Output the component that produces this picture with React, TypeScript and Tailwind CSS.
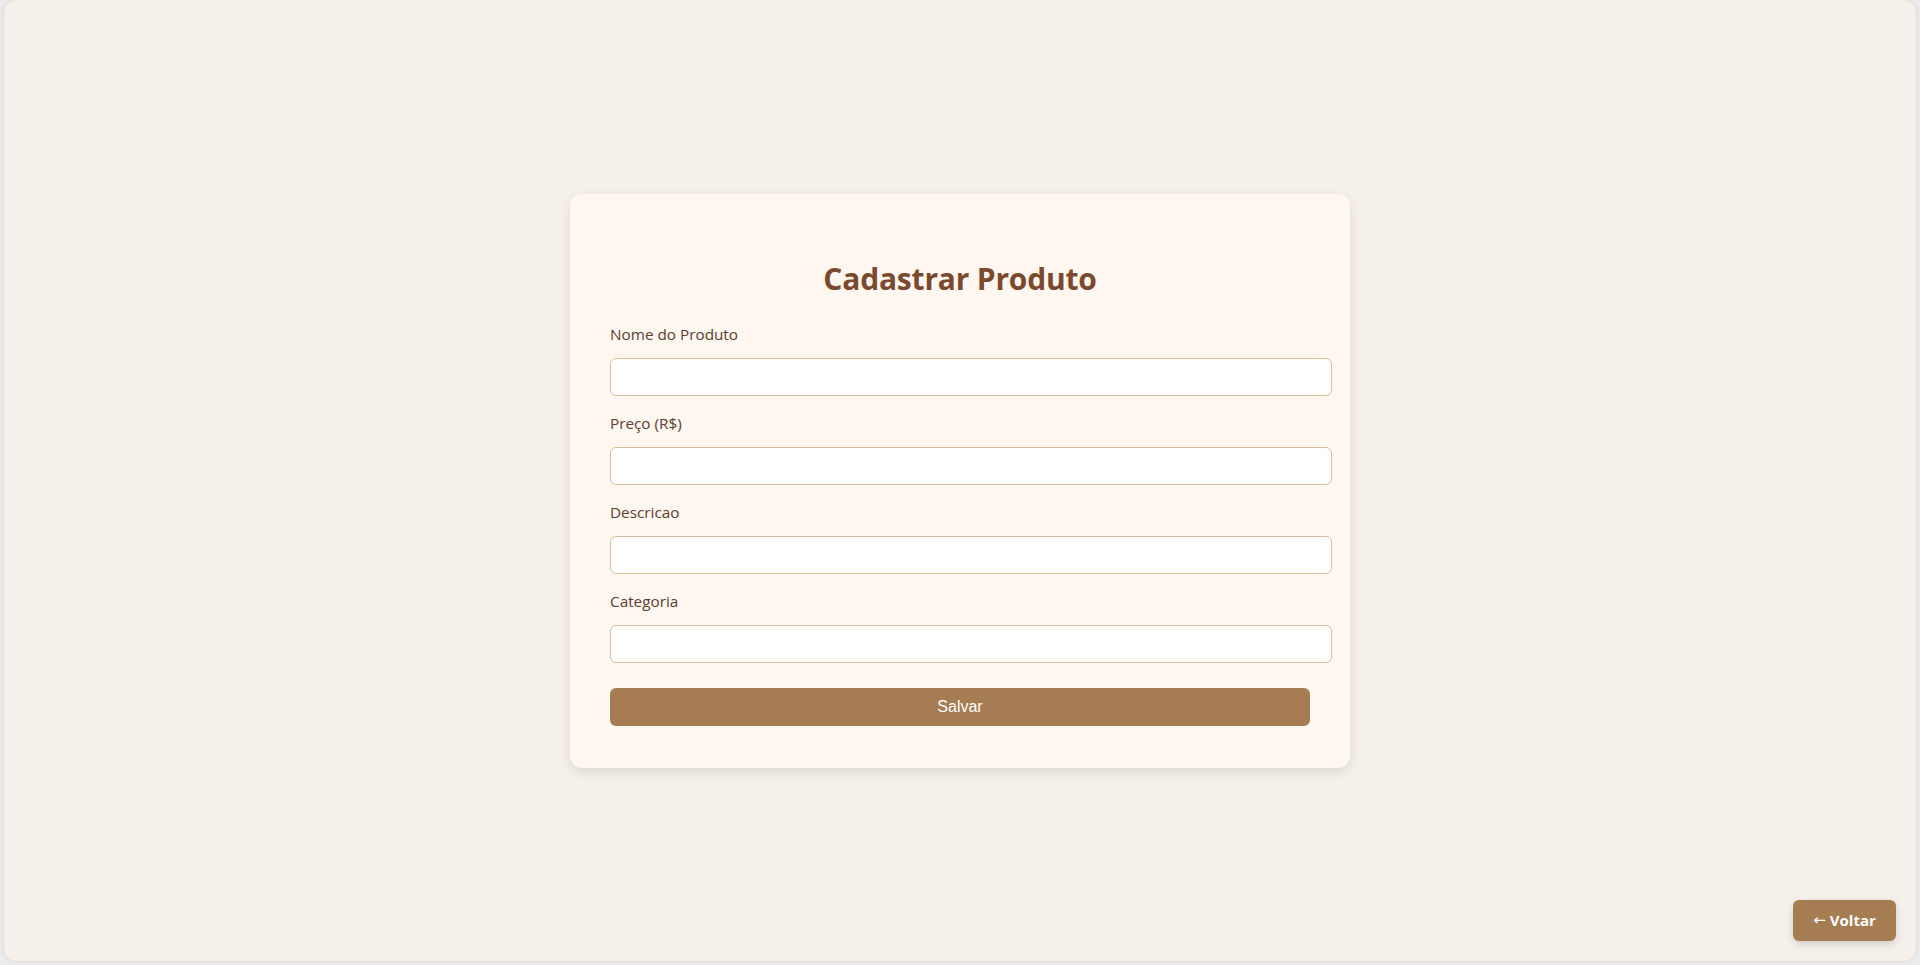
import React from "react";

const fields = ["Nome do Produto", "Preço (R$)", "Descricao", "Categoria"];

export default function App() {
  return (
    <div className="w-[1920px] h-[965px] bg-[#ececec] overflow-hidden" style={{ fontFamily: '"Open Sans", "Noto Sans", sans-serif' }}>
      <div className="relative mx-1 h-[961px] rounded-xl bg-[#f5f0e9] shadow-[0_0_4px_rgba(0,0,0,0.12)] flex items-center justify-center">
        <div className="w-[780px] h-[574px] rounded-xl bg-[#fff7f0] shadow-[0_4px_12px_rgba(0,0,0,0.1)] px-10 pt-[66px]">
          <h2 className="text-center text-[30px] leading-[38px] font-bold text-[#7b4a2e] tracking-[-0.2px]">Cadastrar Produto</h2>
          <div className="mt-[24px] flex flex-col">
            {fields.map((f) => (
              <div key={f} className="flex flex-col mb-[15px]">
                <label className="text-[15.3px] leading-6 text-[#5a3e2f]">{f}</label>
                <input
                  type="text"
                  className="mt-3 w-[722px] h-[38px] rounded-md border border-[#d8bd9f] bg-white px-2.5 outline-none"
                />
              </div>
            ))}
          </div>
          <button
            className="mt-[10px] w-[700px] h-[38px] rounded-md bg-[#a67c52] text-white text-[16px]"
            style={{ fontFamily: '"Liberation Sans", Arial, sans-serif' }}
          >
            Salvar
          </button>
        </div>
        <button className="absolute right-5 bottom-5 w-[103px] h-[41px] rounded-md bg-[#a67c52] text-white text-[15px] font-bold shadow-[0_3px_8px_rgba(0,0,0,0.15)] flex items-center justify-center gap-1">
          <span style={{ fontFamily: '"DejaVu Sans", sans-serif' }} className="font-normal text-[15px]">←</span>
          <span>Voltar</span>
        </button>
      </div>
    </div>
  );
}
